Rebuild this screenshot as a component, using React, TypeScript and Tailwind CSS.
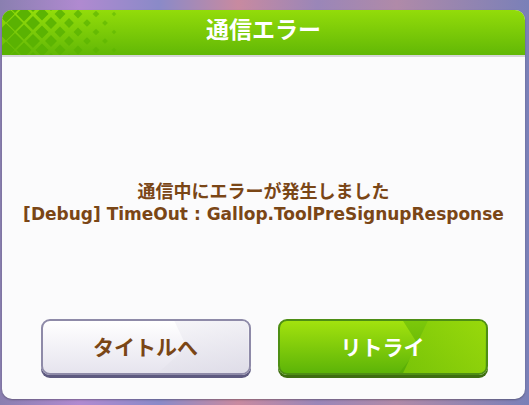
import React from "react";

function Diamonds() {
  const items: React.ReactNode[] = [];
  const pitch = 18;
  for (let col = 0; col < 8; col++) {
    for (let row = -1; row < 7; row++) {
      const cx = 4 + col * pitch + (row % 2 === 0 ? 0 : pitch / 2);
      const cy = 4 + row * (pitch / 2);
      const t = cx / 118;
      const r = Math.max(0, 8.8 * (1 - t * 0.78));
      if (r < 1.2 || cx > 112) continue;
      items.push(
        <polygon
          key={`${col}-${row}`}
          points={`${cx},${cy - r} ${cx + r},${cy} ${cx},${cy + r} ${cx - r},${cy}`}
          fill="#5ab202"
          opacity={Math.min(1, 1.2 - t * 0.7)}
        />
      );
    }
  }
  return (
    <svg className="absolute left-0 top-0" width="130" height="45" viewBox="0 0 130 45">
      {items}
    </svg>
  );
}

export default function App() {
  const font = { fontFamily: '"Noto Sans CJK JP", "Noto Sans", sans-serif' };
  const latin = { fontFamily: '"DejaVu Sans", "Noto Sans CJK JP", sans-serif' };
  return (
    <div
      className="w-[529px] h-[405px] overflow-hidden pt-[10px] pl-[2px]"
      style={{
        background:
          "linear-gradient(90deg,#8a7fb0 0%,#b08ad0 15%,#8a8ac8 30%,#c88aa0 45%,#9a86b8 60%,#b08aa8 75%,#7a80b8 100%)",
      }}
    >
      <div className="w-[523px] h-[389px] rounded-[10px] bg-[#fbfbfc] overflow-hidden flex flex-col shadow-[0_1px_2px_rgba(0,0,0,0.3)]" style={font}>
        <div className="relative h-[45px] bg-gradient-to-b from-[#93dc0a] to-[#62b806] flex items-center justify-center border-b-2 border-[#d6d6d8] box-content">
          <Diamonds />
          <span className="relative -top-[4px] text-white font-bold text-[23px] tracking-[0px] leading-none">通信エラー</span>
        </div>
        <div className="flex-1 flex flex-col items-center">
          <div className="mt-[121px] flex flex-col items-center text-[#7a4616] font-bold leading-[24px]">
            <span className="text-[18px]">通信中にエラーが発生しました</span>
            <span className="text-[17px]" style={latin}>[Debug] TimeOut : Gallop.ToolPreSignupResponse</span>
          </div>
          <div className="mt-[93px] flex gap-[27px] pl-[1px]">
            <div className="relative w-[210px] h-[56px] rounded-[9px] border-2 border-[#8e8aa8] bg-gradient-to-b from-[#ffffff] to-[#e6e4ee] shadow-[0_3px_0_#5e5a80] overflow-hidden flex items-center justify-center">
              <div
                className="absolute inset-0 bg-gradient-to-br from-[#ffffff] to-[#dcdae6] opacity-80"
                style={{ clipPath: "polygon(64% 0, 100% 0, 100% 100%, 56% 100%, 70% 50%)" }}
              />
              <span className="relative text-[#7a4616] font-bold text-[21px] tracking-[0px]">タイトルへ</span>
            </div>
            <div className="relative w-[210px] h-[56px] rounded-[9px] border-2 border-[#4e8e14] bg-gradient-to-b from-[#a2e20e] to-[#5cb408] shadow-[0_3px_0_#3e6e10] overflow-hidden flex items-center justify-center">
              <div
                className="absolute inset-0 bg-gradient-to-b from-[#7cc80a] to-[#56ac06]"
                style={{ clipPath: "polygon(60% 0, 100% 0, 100% 100%, 58% 100%, 68% 50%)" }}
              />
              <div
                className="absolute inset-0 bg-gradient-to-r from-[#5cb406] to-[#a4e00c] opacity-70"
                style={{ clipPath: "polygon(72% 0, 100% 0, 100% 100%, 60% 100%)" }}
              />
              <span className="relative text-white font-bold text-[21px] tracking-[0px]">リトライ</span>
            </div>
          </div>
        </div>
      </div>
    </div>
  );
}
